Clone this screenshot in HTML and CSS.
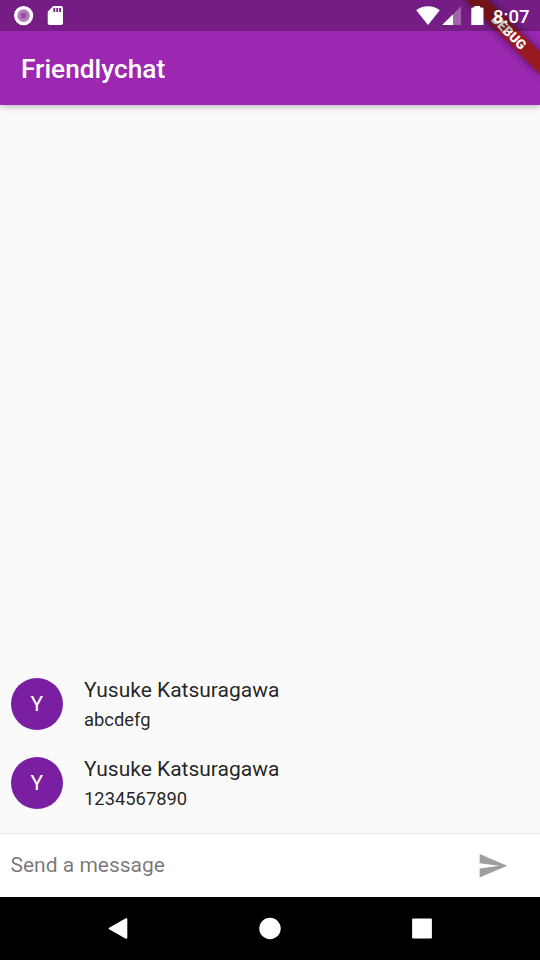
FILE: index.html
```
<!DOCTYPE html>
<html lang="en">
<head>
<meta charset="utf-8">
<title>Friendlychat</title>
<link rel="stylesheet" href="styles.css">
</head>
<body>
<div class="screen">
  <header class="app-bar"><h1 class="title">Friendlychat</h1></header>
  <svg class="debug-banner" width="100" height="100" viewBox="0 0 100 100">
    <defs><filter id="soft" x="-30%" y="-60%" width="160%" height="220%"><feGaussianBlur stdDeviation="4"/></filter></defs>
    <g transform="translate(100 0) rotate(45)">
      <rect x="-52.5" y="36.75" width="105" height="15.75" fill="#000" fill-opacity=".5" filter="url(#soft)"/>
      <rect x="-52.5" y="36.75" width="105" height="15.75" fill="#a01a1a" fill-opacity=".9"/>
      <text class="debug-text" x="0.6" y="49.4" text-anchor="middle">DEBUG</text>
    </g>
  </svg>
  <div class="status-bar">
    <svg class="status-icons" width="70" height="31" viewBox="0 0 70 31">
      <circle cx="23.6" cy="15.6" r="9.6" fill="#fff"/>
      <circle cx="23.6" cy="15.6" r="6.3" fill="#b37dbd"/>
      <circle cx="23.6" cy="15.6" r="2.8" fill="#9550a2"/>
      <path fill="#fff" fill-rule="evenodd" d="M53.2 6H61q2 0 2 2v15q0 2-2 2H49.7q-2 0-2-2V11.8zM53.4 8v4h1.8V8zM56.3 8v4h1.8V8zM59.2 8v4H61V8z"/>
    </svg>
    <svg class="status-icons" width="74" height="31" viewBox="414 0 74 31">
      <path fill="#fff" d="M416.2 10.3Q421.3 6.2 428 6.2t11.8 4.1L428 25z"/>
      <path fill="#fff" fill-opacity=".32" d="M461 6.2V25h-8V14.2z"/>
      <path fill="#fff" d="M453 14.2V25h-10.9z"/>
      <path fill="#fff" d="M474.3 6h5.8v1.6h2q1.4 0 1.4 1.3V25h-12.2V8.9q0-1.3 1.4-1.3h1.6z"/>
    </svg>
    <span class="clock">8:07</span>
  </div>
  <main class="messages">
    <article class="message">
      <div class="avatar">Y</div>
      <div class="content"><div class="name">Yusuke Katsuragawa</div><div class="text">abcdefg</div></div>
    </article>
    <article class="message">
      <div class="avatar">Y</div>
      <div class="content"><div class="name">Yusuke Katsuragawa</div><div class="text">1234567890</div></div>
    </article>
  </main>
  <div class="composer">
    <span class="hint">Send a message</span>
    <svg class="send" width="31.5" height="31.5" viewBox="0 0 24 24"><path fill="#9e9e9e" d="M2.01 21L23 12 2.01 3 2 10l15 2-15 2z"/></svg>
  </div>
  <nav class="nav-bar">
    <svg width="24" height="24" viewBox="0 0 24 24"><path fill="#fff" stroke="#fff" stroke-width="2" stroke-linejoin="round" d="M3.6 12.5L20.3 3.2v18.6z"/></svg>
    <svg width="24" height="24" viewBox="0 0 24 24"><circle cx="12" cy="12.5" r="10.7" fill="#fff"/></svg>
    <svg width="24" height="24" viewBox="0 0 24 24"><rect x="2.1" y="2.6" width="19.8" height="19.9" rx="1" fill="#fff"/></svg>
  </nav>
</div>
</body>
</html>
```
FILE: styles.css
```
* { box-sizing: border-box; }
body { margin: 0; font-family: Roboto, "Liberation Sans", sans-serif; }
.screen {
  position: relative;
  display: flex;
  flex-direction: column;
  width: 540px;
  height: 960px;
  overflow: hidden;
  background: #fafafa;
}
.app-bar {
  position: relative;
  flex: none;
  height: 105px;
  padding: 33px 21px 0;
  display: flex;
  align-items: center;
  background: #9c27b0;
  box-shadow: 0 2px 6px rgba(0, 0, 0, .24);
}
.title { margin: 0; color: #fff; font-size: 26.25px; font-weight: 500; line-height: 32px; }
.debug-banner { position: absolute; top: 0; right: 0; }
.debug-text { fill: #fff; font-size: 13.39px; font-weight: 900; }
.status-bar {
  position: absolute;
  top: 0;
  left: 0;
  width: 540px;
  height: 31px;
  display: flex;
  background: rgba(0, 0, 0, .25);
}
.status-icons + .status-icons { margin-left: auto; }
.clock {
  width: 52px;
  padding-left: 5px;
  color: #fff;
  font-size: 18.6px;
  font-weight: 500;
  line-height: 35px;
}
.messages {
  flex: 1;
  display: flex;
  flex-direction: column;
  justify-content: flex-end;
  padding: 0 10.5px 10.5px;
}
.message { display: flex; gap: 21px; height: 52.5px; margin: 13px 0 13.5px; }
.avatar {
  width: 52.5px;
  height: 52.5px;
  border-radius: 50%;
  background: #7b1fa2;
  color: #fff;
  font-size: 21px;
  line-height: 52.5px;
  text-align: center;
}
.name { font-size: 21px; line-height: 25px; color: rgba(0, 0, 0, .87); }
.text { margin-top: 6.5px; font-size: 18.375px; line-height: 22px; color: rgba(0, 0, 0, .87); }
.composer {
  flex: none;
  height: 64px;
  padding: 0 32px 0 10.5px;
  display: flex;
  align-items: center;
  justify-content: space-between;
  border-top: 1px solid #e4e4e4;
  background: #fff;
}
.hint { font-size: 21px; line-height: 25px; color: rgba(0, 0, 0, .54); }
.nav-bar {
  flex: none;
  height: 63px;
  padding: 0 106px 1px;
  display: flex;
  align-items: center;
  justify-content: space-between;
  background: #000;
}
```
